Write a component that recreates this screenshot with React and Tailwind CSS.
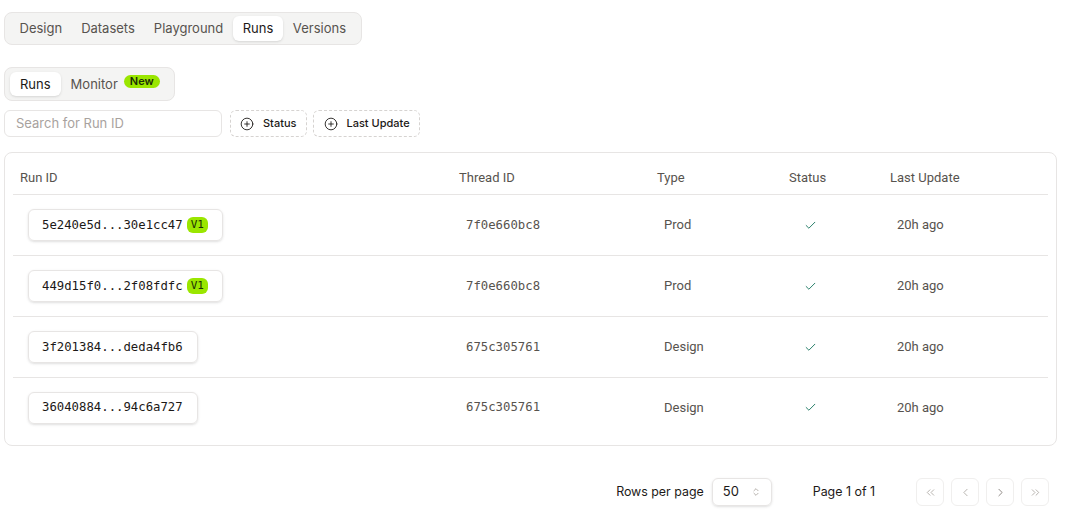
import { Check, ChevronsUpDown, ChevronLeft, ChevronRight, ChevronsLeft, ChevronsRight, CirclePlus } from 'lucide-react';

const runs = [
  { id: '5e240e5d...30e1cc47', version: 'V1', thread: '7f0e660bc8', type: 'Prod', updated: '20h ago' },
  { id: '449d15f0...2f08fdfc', version: 'V1', thread: '7f0e660bc8', type: 'Prod', updated: '20h ago' },
  { id: '3f201384...deda4fb6', thread: '675c305761', type: 'Design', updated: '20h ago' },
  { id: '36040884...94c6a727', thread: '675c305761', type: 'Design', updated: '20h ago' },
];

const topTabs = ['Design', 'Datasets', 'Playground', 'Runs', 'Versions'];

const App = () => {
  return (
    <div className="min-h-[518px] bg-white px-1 pt-3 font-['Inter',sans-serif] text-[13px] text-[#1c1917]">
      {/* Top tabs */}
      <div className="flex">
        <div className="flex items-center rounded-lg border border-[#e7e5e4] bg-[#f4f4f3] px-[5px] py-[3px] leading-[17px]">
          {topTabs.map(tab => (
            <div
              key={tab}
              className={
                tab === 'Runs'
                  ? 'rounded-md bg-white px-[10px] py-[4px] text-[#1c1917] shadow-sm'
                  : 'px-[9.5px] py-[4px] text-[#57534e]'
              }
            >
              {tab}
            </div>
          ))}
        </div>
      </div>

      {/* Sub tabs */}
      <div className="mt-[22px] flex">
        <div className="flex items-center rounded-lg border border-[#e7e5e4] bg-[#f4f4f3] p-[4px] pl-[5px] pr-[14px] leading-[16px]">
          <div className="rounded-md bg-white px-[10px] py-[4px] shadow-sm">Runs</div>
          <div className="ml-[10px] text-[#57534e]">Monitor</div>
          <span className="relative -top-[3px] ml-[6px] rounded-full bg-[#9ae600] px-[6px] text-[11px] font-semibold leading-[13px] text-[#1a2e05]">
            New
          </span>
        </div>
      </div>

      {/* Filters */}
      <div className="mt-[9px] flex items-center gap-2">
        <div className="flex h-[27px] w-[218px] items-center rounded-md border border-[#e7e5e4] px-[11px] text-[13px] text-[#a8a29e]">
          Search for Run ID
        </div>
        <div className="flex h-[27px] items-center gap-[9px] rounded-md border border-dashed border-[#d6d3d1] pl-[9px] pr-[10px] text-[11px] font-medium">
          <CirclePlus size={14} strokeWidth={1.5} />
          Status
        </div>
        <div className="ml-[-2px] flex h-[27px] items-center gap-[8px] rounded-md border border-dashed border-[#d6d3d1] pl-[10px] pr-[9px] text-[11px] font-medium">
          <CirclePlus size={14} strokeWidth={1.5} />
          Last Update
        </div>
      </div>

      {/* Table */}
      <div className="mt-[15px] mr-1 rounded-lg border border-[#e7e5e4] p-2 font-['Roboto',sans-serif]">
        <div className="grid h-[34px] grid-cols-[438px_198px_132px_101px_1fr] items-center border-b border-[#e7e5e4] text-[13px] text-[#57534e]">
          <div className="px-[7px]">Run ID</div>
          <div className="px-[8px]">Thread ID</div>
          <div className="px-[8px]">Type</div>
          <div className="px-[8px]">Status</div>
          <div className="px-[8px]">Last Update</div>
        </div>
        {runs.map((run, idx) => (
          <div
            key={run.id}
            className={
              'grid grid-cols-[438px_198px_132px_101px_1fr] items-center text-[13px] ' +
              (idx < runs.length - 1 ? 'h-[61px] border-b border-[#e7e5e4]' : 'h-[59px]')
            }
          >
            <div className="pl-[15px]">
              <div className="inline-flex h-[32px] items-center gap-[4px] rounded-md border border-[#e7e5e4] pl-[13px] pr-[14px] font-['DejaVu_Sans_Mono',monospace] text-[12.3px] text-[#1c1917] shadow-sm">
                {run.id}
                {run.version && (
                  <span className="rounded-md bg-[#9ae600] px-[4px] text-[11px] leading-[16px] text-[#1a2e05]">
                    {run.version}
                  </span>
                )}
              </div>
            </div>
            <div className="pl-[15px] font-['DejaVu_Sans_Mono',monospace] text-[12.3px] text-[#57534e]">{run.thread}</div>
            <div className="pl-[15px] text-[#57534e]">{run.type}</div>
            <div className="pl-[23px] text-[#1f7a63]">
              <Check size={13} strokeWidth={1.75} />
            </div>
            <div className="pl-[15px] text-[#57534e]">{run.updated}</div>
          </div>
        ))}
      </div>

      {/* Pagination */}
      <div className="mt-[32px] mr-[12px] flex items-center justify-end text-[12.4px]">
        <div className="flex items-center gap-2">
          <span>Rows per page</span>
          <div className="flex h-[28px] w-[60px] items-center justify-between rounded-md border border-[#e7e5e4] pl-[10px] pr-[10px] text-[13px] shadow-sm">
            <span>50</span>
            <ChevronsUpDown size={10} className="text-[#a8a29e]" />
          </div>
        </div>
        <div className="ml-[41px]">Page 1 of 1</div>
        <div className="ml-[41px] flex items-center gap-[7px] text-[#a8a29e]">
          {[ChevronsLeft, ChevronLeft, ChevronRight, ChevronsRight].map((Icon, idx) => (
            <div key={idx} className="flex h-[28px] w-[28px] items-center justify-center rounded-md border border-[#f0efee]">
              <Icon size={13} strokeWidth={1.5} className={idx === 2 ? 'text-[#78716c]' : ''} />
            </div>
          ))}
        </div>
      </div>
    </div>
  );
};

export default App;
